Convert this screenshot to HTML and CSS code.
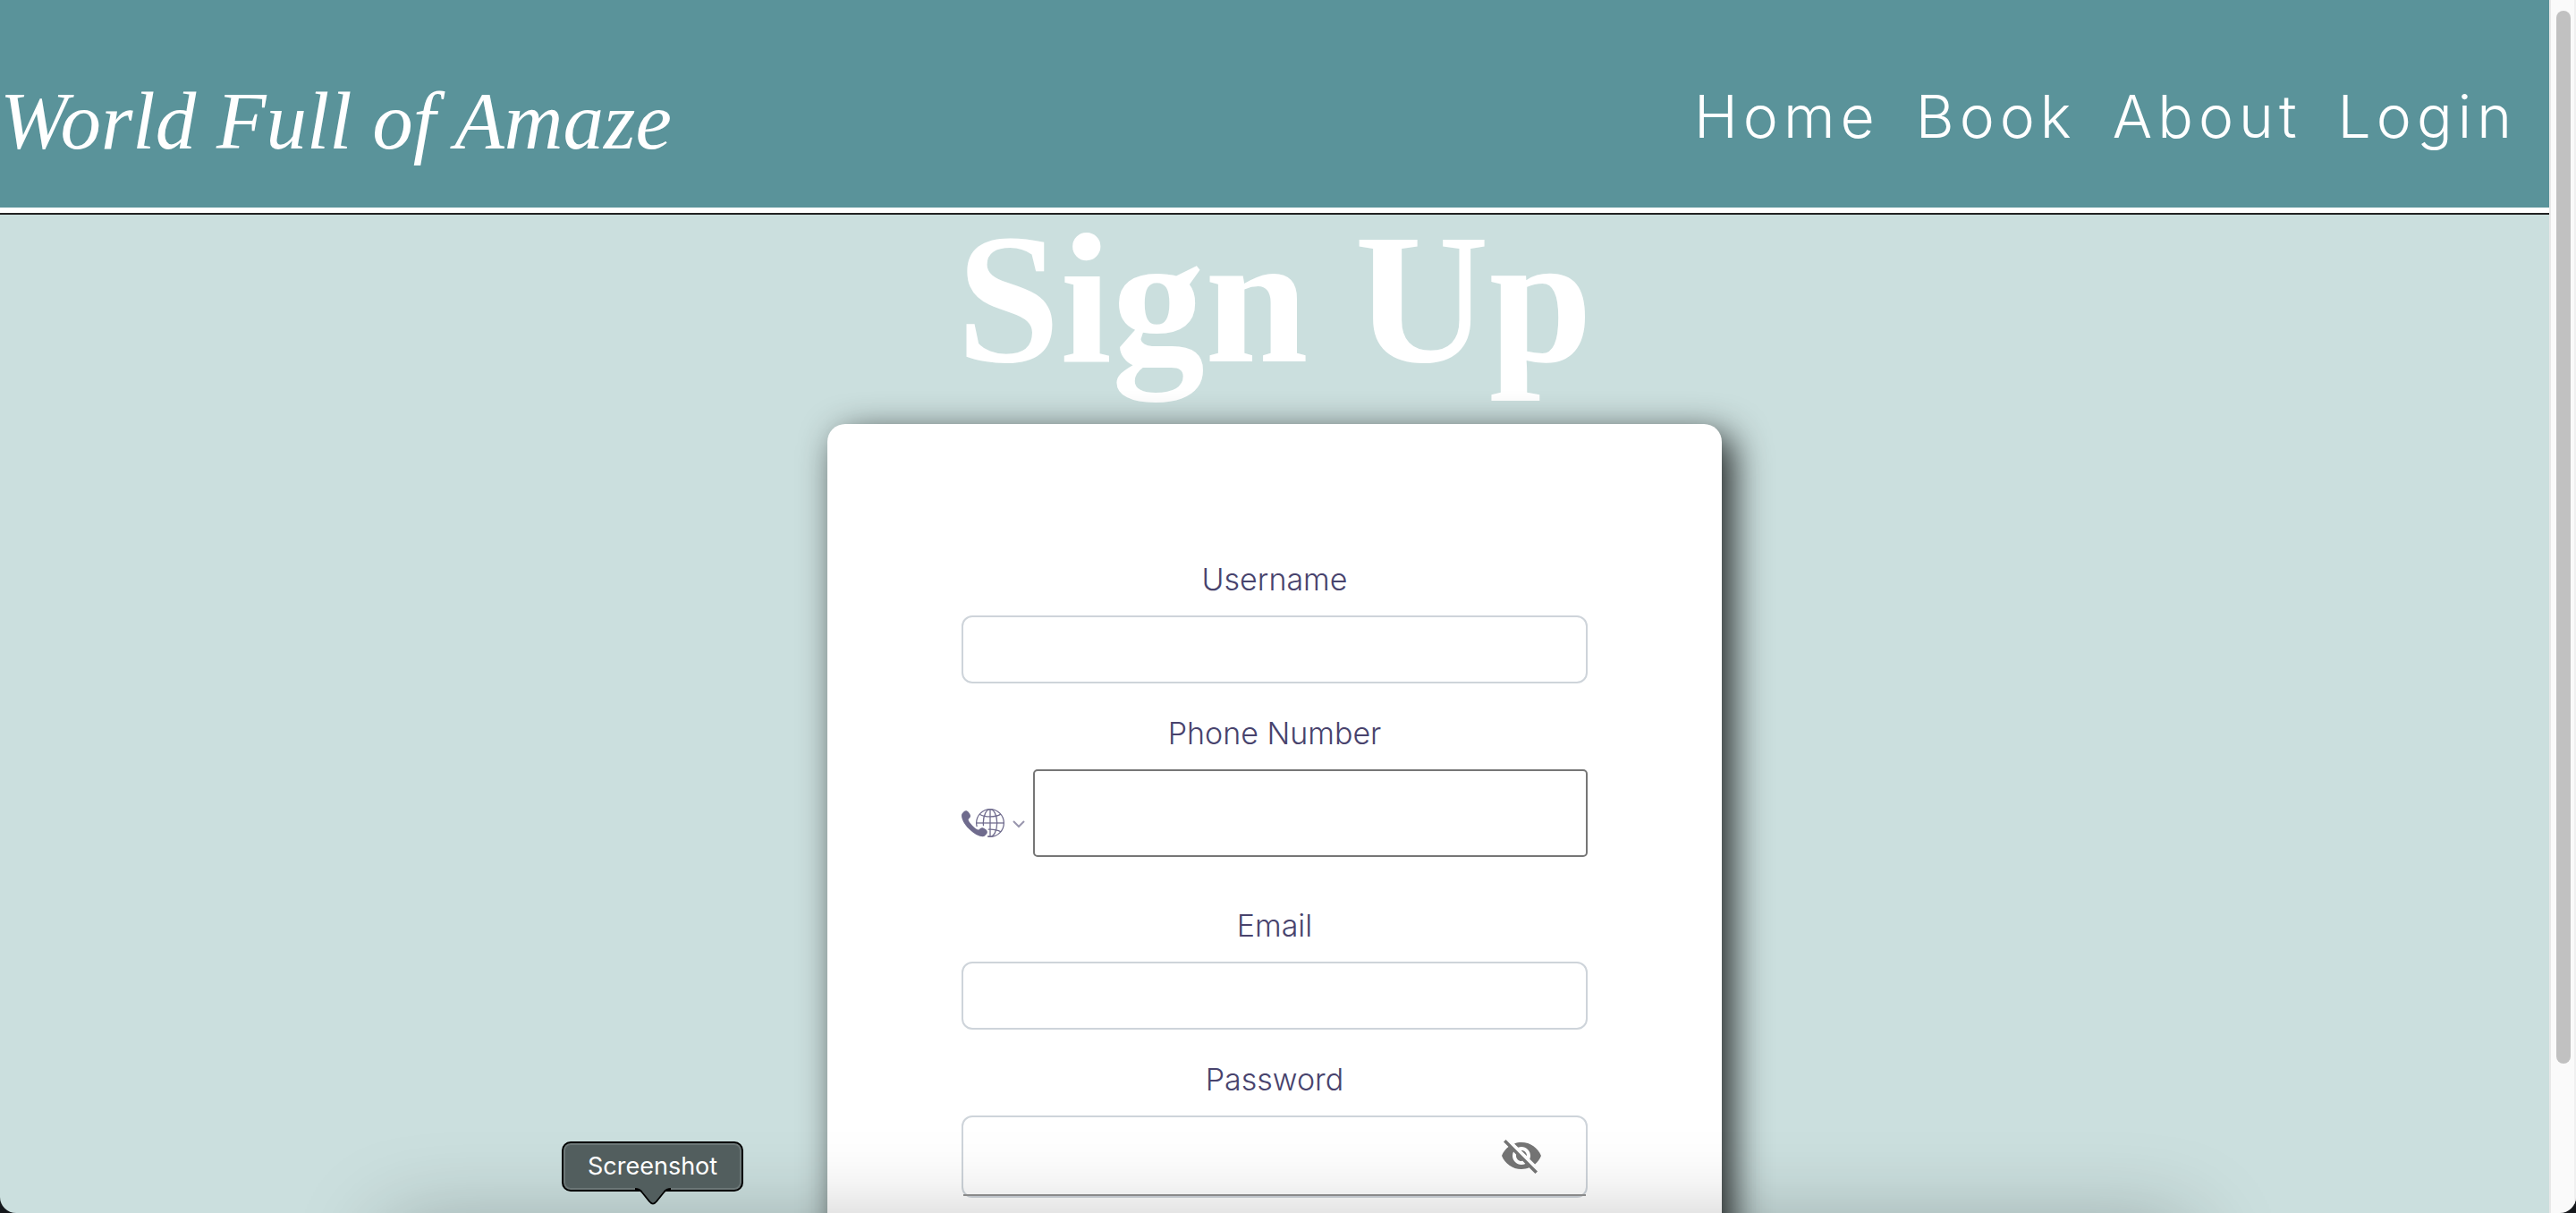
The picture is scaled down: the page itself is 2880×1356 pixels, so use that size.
FILE: index.html
```html
<!DOCTYPE html>
<html lang="en">
<head>
<meta charset="utf-8">
<meta name="viewport" content="width=device-width, initial-scale=1">
<title>Sign Up - World Full of Amaze</title>
<link rel="stylesheet" href="styles.css">
</head>
<body>
<div class="window">
  <div class="page">
    <header class="site-header">
      <a class="brand" href="#">World Full of Amaze</a>
      <nav class="site-nav">
        <a href="#">Home</a>
        <a href="#">Book</a>
        <a href="#">About</a>
        <a href="#">Login</a>
      </nav>
    </header>
    <main class="content">
      <h1 class="title">Sign Up</h1>
      <form class="card">
        <div class="field">
          <label for="username">Username</label>
          <input class="input" id="username" type="text">
        </div>
        <div class="field">
          <label for="phone">Phone Number</label>
          <div class="phone">
            <div class="country">
              <svg class="country-icon" viewBox="0 0 75 50" aria-hidden="true">
                <g stroke="currentColor" fill="none" stroke-width="2" stroke-miterlimit="10">
                  <path stroke-linecap="round" d="M47.2,36.1C48.1,36,49,36,50,36c7.4,0,14,1.7,18.5,4.3"/>
                  <path d="M68.6,9.6C64.2,12.3,57.5,14,50,14c-7.4,0-14-1.7-18.5-4.3"/>
                  <line x1="26" y1="25" x2="74" y2="25"/>
                  <line x1="50" y1="1" x2="50" y2="49"/>
                  <path stroke-linecap="round" d="M46.3,48.7c1.2,0.2,2.5,0.3,3.7,0.3c13.3,0,24-10.7,24-24S63.3,1,50,1S26,11.7,26,25c0,2,0.3,3.9,0.7,5.8"/>
                  <path stroke-linecap="round" d="M46.8,48.2c1,0.6,2.1,0.8,3.2,0.8c6.6,0,12-10.7,12-24S56.6,1,50,1S38,11.7,38,25c0,1.4,0.1,2.7,0.2,4c0,0.1,0,0.2,0,0.2"/>
                </g>
                <path fill="currentColor" d="M12.4,17.9c2.9-2.9,5.4-4.8,0.3-11.2S4.1,5.2,1.3,8.1C-2,11.4,1.1,23.5,13.1,35.6s24.3,15.2,27.5,11.9c2.8-2.8,7.8-6.3,1.4-11.5s-8.3-2.6-11.2,0.3c-2,2-7.2-2.2-11.7-6.7S10.4,19.9,12.4,17.9z"/>
              </svg>
              <svg class="country-arrow" viewBox="0 0 16 14" aria-hidden="true"><path d="M2 5l6 6 6-6" fill="none" stroke="currentColor" stroke-width="2"/></svg>
              <select class="country-select" aria-label="Phone number country">
                <option>International</option>
              </select>
            </div>
            <input class="phone-input" id="phone" type="tel">
          </div>
        </div>
        <div class="field">
          <label for="email">Email</label>
          <input class="input" id="email" type="email">
        </div>
        <div class="field">
          <label for="password">Password</label>
          <div class="password">
            <input class="password-input" id="password" type="password">
            <button class="reveal" type="button" aria-label="Show password">
              <svg viewBox="0 0 24 24" fill="currentColor" aria-hidden="true"><path d="M12 7c2.76 0 5 2.24 5 5 0 .65-.13 1.26-.36 1.83l2.92 2.92c1.51-1.26 2.7-2.89 3.43-4.75-1.73-4.39-6-7.5-11-7.5-1.4 0-2.74.25-3.98.7l2.16 2.16C10.74 7.13 11.35 7 12 7zM2 4.27l2.28 2.28.46.46C3.08 8.3 1.78 10.02 1 12c1.73 4.39 6 7.5 11 7.5 1.55 0 3.03-.3 4.38-.84l.42.42L19.73 22 21 20.73 3.27 3 2 4.27zM7.53 9.8l1.55 1.55c-.05.21-.08.43-.08.65 0 1.66 1.34 3 3 3 .22 0 .44-.03.65-.08l1.55 1.55c-.67.33-1.41.53-2.2.53-2.76 0-5-2.24-5-5 0-.79.2-1.53.53-2.2zm4.31-.78l3.15 3.15.02-.16c0-1.66-1.34-3-3-3l-.17.01z"/></svg>
            </button>
          </div>
        </div>
      </form>
    </main>
  </div>
  <div class="scrollbar" aria-hidden="true"><div class="thumb"></div></div>
  <div class="dock-shadow"></div>
</div>
<div class="tooltip" role="tooltip">Screenshot
  <svg class="tooltip-tail" viewBox="0 0 40 20" aria-hidden="true">
    <path d="M2 0Q6 1 9 5L16 14Q20 19 24 14L31 5Q34 1 38 0Z" fill="#525e5e"/>
    <path d="M0 1Q5 1 8 5L16 15Q20 20 24 15L32 5Q35 1 40 1" fill="none" stroke="#000" stroke-width="2"/>
  </svg>
</div>
</body>
</html>
```
FILE: styles.css
```css
* {
  box-sizing: border-box;
}

body {
  margin: 0;
  background: #15181c;
  font-family: Inter, "Open Sans", sans-serif;
  font-weight: 300;
  color: #48436d;
}

.window {
  position: relative;
  display: grid;
  grid-template-columns: 1fr 30px;
  grid-template-rows: 100%;
  height: 100vh;
  overflow: hidden;
  border-radius: 0 0 18px 18px;
}

.page {
  min-width: 0;
  background: #cbdfde;
}

.site-header {
  display: flex;
  align-items: center;
  justify-content: space-between;
  height: 240px;
  padding: 32px 36px 0 0;
  background: #5a939a;
  border-bottom: 2px solid #222;
  box-shadow: inset 0 -6px #fff;
}

.brand {
  font: italic 91px/1 "Liberation Serif", serif;
  color: #fff;
  text-decoration: none;
  white-space: nowrap;
}

.site-nav {
  display: flex;
  gap: 40px;
  padding-bottom: 10px;
}

.site-nav a {
  font-size: 66px;
  font-weight: 300;
  letter-spacing: 6px;
  color: #fff;
  text-decoration: none;
}

.content {
  display: flex;
  flex-direction: column;
  align-items: center;
}

.title {
  margin: 0 0 46px;
  font: bold 208px/188px "Liberation Serif", serif;
  color: #fff;
}

.card {
  display: flex;
  flex-direction: column;
  gap: 32px;
  width: 1000px;
  max-width: 100%;
  padding: 150px;
  background: #fff;
  border-radius: 20px;
  box-shadow: 12px 12px 40px rgba(0, 0, 0, .85);
}

.field {
  display: flex;
  flex-direction: column;
  gap: 16px;
}

.field label {
  font-size: 34px;
  line-height: 48px;
  text-align: center;
}

.input {
  height: 76px;
  padding: 12px 24px;
  border: 2px solid #ced4da;
  border-radius: 12px;
  background: #fff;
  font: inherit;
  font-size: 32px;
}

.phone {
  display: flex;
  gap: 8px;
  padding-bottom: 21px;
}

.country {
  position: relative;
  display: flex;
  align-items: center;
  gap: 8px;
  padding-top: 22px;
  color: #6f6b8d;
}

.country-icon {
  width: 48px;
  height: 32px;
}

.country-arrow {
  width: 16px;
  height: 14px;
  opacity: .7;
}

.country-select {
  position: absolute;
  inset: 0;
  width: 100%;
  opacity: 0;
}

.phone-input {
  flex: 1;
  min-width: 0;
  height: 98px;
  border: 2px solid #767676;
  border-radius: 5px;
  background: #fff;
  font: inherit;
  font-size: 32px;
}

.password {
  display: flex;
  height: 92px;
  padding: 0;
  border: 2px solid #ced4da;
  border-radius: 12px;
}

.password-input {
  flex: 1;
  min-width: 0;
  border: 0;
  border-bottom: 2px solid #949494;
  background: none;
  font: inherit;
  font-size: 32px;
}

.reveal {
  display: flex;
  align-items: center;
  padding: 0 48px 0 0;
  border: 0;
  border-bottom: 2px solid #949494;
  background: none;
  color: #757575;
}

.reveal svg {
  width: 48px;
  height: 48px;
}

.scrollbar {
  padding: 12px 4px 0 6px;
  background: #fafafa;
  border-left: 2px solid #e8e8e8;
  border-right: 2px solid #f0f0f0;
}

.thumb {
  height: calc(88% - 6px);
  width: 16px;
  border-radius: 8px;
  background: #c1c1c1;
}

/* soft shade thrown upward by the dock below the window */
.dock-shadow {
  position: absolute;
  top: calc(100% + 14px);
  left: 15%;
  right: 15%;
  height: 200px;
  box-shadow: 0 0 100px rgba(0, 0, 0, .27);
}

.tooltip {
  position: fixed;
  left: 628px;
  bottom: 24px;
  padding: 0 27px;
  border: 2px solid #000;
  border-radius: 10px;
  background: #525e5e;
  box-shadow: inset 0 0 0 2px #6c7777;
  color: #fff;
  font-size: 27px;
  font-weight: 400;
  line-height: 52px;
}

.tooltip-tail {
  position: absolute;
  top: 100%;
  left: 50%;
  width: 40px;
  height: 20px;
  margin: -2px 0 0 -20px;
}
```
